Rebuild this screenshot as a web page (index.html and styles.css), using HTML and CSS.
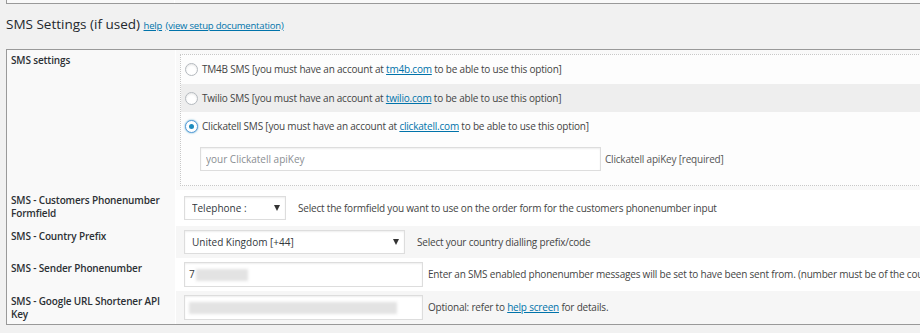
FILE: index.html
```html
<!DOCTYPE html>
<html lang="en">
<head>
    <meta charset="UTF-8">
    <title>SMS Settings</title>
    <link rel="stylesheet" href="styles.css">
</head>
<body>
<div class="wrap">

    <!-- bottom edge of the settings table above -->
    <div class="prev-table">
        <div class="prev-label"></div>
        <div class="prev-value"></div>
    </div>

    <h2 class="section-title">SMS Settings (if used) <a href="#">help</a> <a href="#">(view setup documentation)</a></h2>

    <table class="form-table">
        <tr class="row-odd">
            <th>SMS settings</th>
            <td class="gateway-cell">
                <div class="sms-gateways">
                    <label class="gateway gateway-first"><input type="radio" name="sms_gateway"> <span>TM4B SMS [you must have an account at <a href="#">tm4b.com</a> to be able to use this option]</span></label>
                    <label class="gateway gateway-alt"><input type="radio" name="sms_gateway"> <span>Twilio SMS [you must have an account at <a href="#">twilio.com</a> to be able to use this option]</span></label>
                    <label class="gateway"><input type="radio" name="sms_gateway" checked> <span>Clickatell SMS [you must have an account at <a href="#">clickatell.com</a> to be able to use this option]</span></label>
                    <div class="gateway-key">
                        <input type="text" class="key-input" placeholder="your Clickatell apiKey">
                        <span class="hint">Clickatell apiKey [required]</span>
                    </div>
                </div>
            </td>
        </tr>
        <tr class="row-even row-tall">
            <th>SMS - Customers Phonenumber Formfield</th>
            <td>
                <div class="field">
                    <span class="select-box select-small">
                        <select><option>Telephone :</option></select>
                    </span>
                    <span class="desc desc-select">Select the formfield you want to use on the order form for the customers phonenumber input</span>
                </div>
            </td>
        </tr>
        <tr class="row-odd">
            <th>SMS - Country Prefix</th>
            <td>
                <div class="field">
                    <span class="select-box select-wide">
                        <select><option>United Kingdom [+44]</option></select>
                    </span>
                    <span class="desc desc-select">Select your country dialling prefix/code</span>
                </div>
            </td>
        </tr>
        <tr class="row-even">
            <th>SMS - Sender Phonenumber</th>
            <td>
                <div class="field">
                    <div class="text-input">7<span class="redacted redacted-short"></span></div>
                    <span class="desc">Enter an SMS enabled phonenumber messages will be set to have been sent from. (number must be of the country set above)</span>
                </div>
            </td>
        </tr>
        <tr class="row-odd">
            <th>SMS - Google URL Shortener API Key</th>
            <td>
                <div class="field">
                    <div class="text-input"><span class="redacted redacted-long"></span></div>
                    <span class="desc">Optional: refer to <a href="#">help screen</a> for details.</span>
                </div>
            </td>
        </tr>
    </table>

</div>
</body>
</html>
```

FILE: styles.css
```css
/* Basic reset */
* {
    box-sizing: border-box;
}

body {
    margin: 0;
    background: #f1f1f1;
    color: #444;
    font-family: "Open Sans", sans-serif;
    font-size: 10px;
    line-height: 13px;
    letter-spacing: -0.2px;
    overflow: hidden;
}

a {
    color: #0073aa;
    text-decoration: underline;
}

.wrap {
    width: 1200px;
    padding-left: 6px;
}

/* Tail of the previous table */
.prev-table {
    display: flex;
    height: 4px;
    border: 1px solid #999;
    border-top: 0;
}

.prev-label {
    width: 168px;
    background: #f9f9f9;
    border-right: 1px solid #fff;
}

.prev-value {
    flex: 1;
    background: #f9f9f9;
}

/* Section heading */
.section-title {
    margin: 10px 0 13px;
    font-size: 13.5px;
    line-height: 20px;
    font-weight: 400;
    letter-spacing: 0;
    color: #23282d;
}

.section-title a {
    font-size: 9.5px;
    letter-spacing: -0.2px;
}

/* Settings table */
.form-table {
    width: 100%;
    border: 1px solid #999;
    border-spacing: 0;
}

.form-table th {
    width: 169px;
    padding: 4px 4px 3px;
    border-right: 1px solid #fff;
    background: #f9f9f9;
    color: #2c3034;
    font-weight: 600;
    letter-spacing: -0.15px;
    text-align: left;
    vertical-align: top;
}

.form-table .row-tall th {
    padding-bottom: 6px;
}

.form-table td {
    padding: 4px 8px;
    vertical-align: middle;
}

.row-odd td { background: #f6f6f6; }
.row-even td { background: #fff; }

.form-table td.gateway-cell {
    padding: 4px 0 4px 4px;
    background: #f9f9f9;
}

/* Gateway radio block */
.sms-gateways {
    border: 1px dotted #c8c8c8;
    border-right: 0;
    background: #fdfdfd;
}

.gateway {
    display: flex;
    align-items: center;
    gap: 4px;
    height: 28px;
    padding-left: 4px;
}

.gateway-first { height: 29px; }
.gateway-alt { background: #eee; }

.gateway input[type="radio"] {
    appearance: none;
    position: relative;
    flex: none;
    width: 13px;
    height: 13px;
    margin: 0;
    border: 1px solid #b4b9be;
    border-radius: 50%;
    background: #fff;
    box-shadow: inset 0 1px 2px rgba(0, 0, 0, 0.1);
}

.gateway input[type="radio"]:checked {
    border-color: #5b9dd9;
    box-shadow: 0 0 2px rgba(30, 140, 190, 0.8);
}

.gateway input[type="radio"]:checked::before {
    content: '';
    position: absolute;
    top: 3px;
    left: 3px;
    width: 5px;
    height: 5px;
    border-radius: 50%;
    background: #1e8cbe;
}

.gateway-key {
    display: flex;
    align-items: center;
    gap: 4px;
    padding: 7px 0 14px 19px;
}

.key-input {
    width: 401px;
    height: 24px;
    padding: 0 5px;
    border: 1px solid #ddd;
    background: #fff;
    box-shadow: inset 0 1px 2px rgba(0, 0, 0, 0.07);
    font: inherit;
    color: #32373c;
}

.key-input::placeholder {
    color: #8a8e92;
}

.hint {
    color: #555;
}

/* Field rows */
.field {
    display: flex;
    align-items: center;
    white-space: nowrap;
}

.select-box {
    position: relative;
    display: inline-block;
}

.select-box select {
    display: block;
    appearance: none;
    height: 24px;
    padding: 0 20px 0 7px;
    border: 1px solid #ddd;
    border-radius: 0;
    background: #fff;
    box-shadow: inset 0 1px 2px rgba(0, 0, 0, 0.07);
    font: inherit;
    color: #32373c;
}

/* little black arrow on the select */
.select-box::after {
    content: '';
    position: absolute;
    top: 9px;
    right: 6px;
    border-left: 3px solid transparent;
    border-right: 3px solid transparent;
    border-top: 6px solid #333;
    pointer-events: none;
}

.select-small select { width: 102px; }
.select-wide select { width: 221px; }

.desc { margin-left: 5px; }
.desc-select { margin-left: 12px; }

.text-input {
    display: flex;
    align-items: center;
    width: 239px;
    height: 25px;
    padding: 0 4px;
    border: 1px solid #ddd;
    background: #fff;
    box-shadow: inset 0 1px 2px rgba(0, 0, 0, 0.07);
    color: #32373c;
}

/* blurred-out values */
.redacted {
    display: inline-block;
    height: 12px;
    background: #e3e3e3;
    filter: blur(1.5px);
}

.redacted-short { width: 52px; margin-left: 1px; }
.redacted-long { width: 208px; }
```
